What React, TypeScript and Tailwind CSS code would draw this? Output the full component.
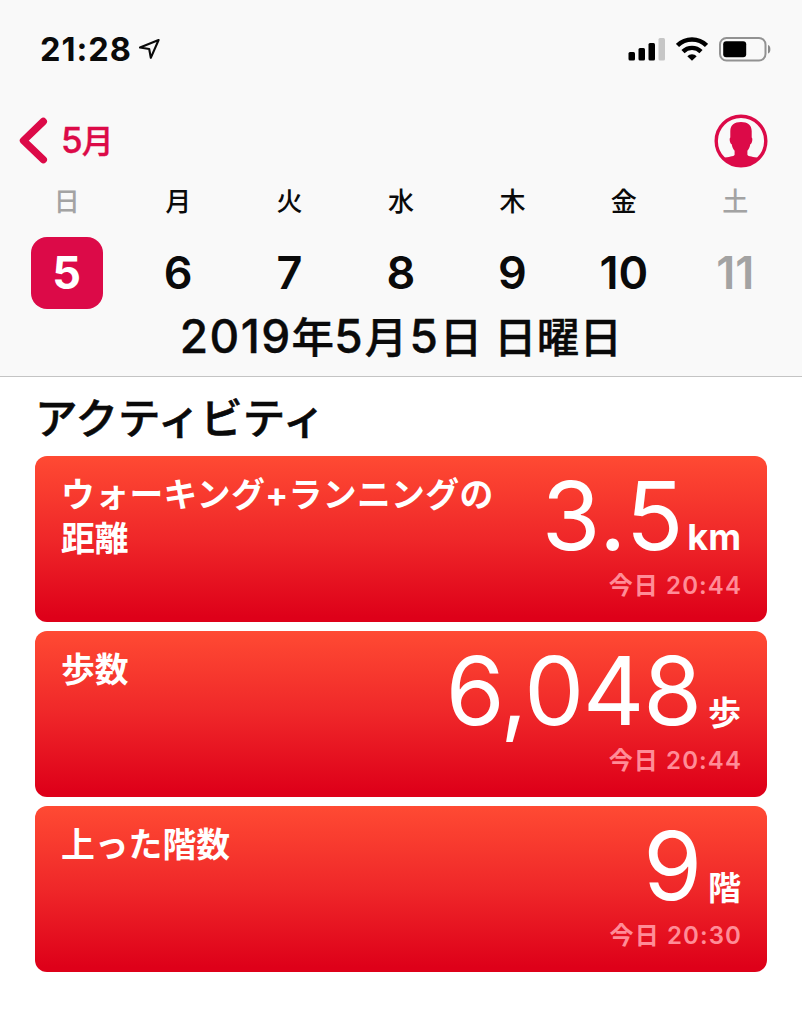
import React, { useState } from 'react';

const days = [
  { week: '日', date: 5, off: true },
  { week: '月', date: 6, off: false },
  { week: '火', date: 7, off: false },
  { week: '水', date: 8, off: false },
  { week: '木', date: 9, off: false },
  { week: '金', date: 10, off: false },
  { week: '土', date: 11, off: true },
];

const activities = [
  { title: ['ウォーキング+ランニングの', '距離'], value: '3.5', unit: 'km', time: '今日 20:44' },
  { title: ['歩数'], value: '6,048', unit: '歩', time: '今日 20:44' },
  { title: ['上った階数'], value: '9', unit: '階', time: '今日 20:30' },
];

const StatusBar = () => {
  return (
    <div className="flex h-[98px] items-center justify-between pl-10 pr-[30px]">
      <div className="flex items-center">
        <span className="pt-[2px] text-[32.5px] leading-10 font-bold tracking-[1px]">21:28</span>
        <svg className="ml-[6px] h-6 w-6" viewBox="0 0 24 24" fill="none" stroke="#0a0a0a" strokeWidth="2.1" strokeLinejoin="round">
          <path d="M20.600 3 2 10.500 11.200 12 12.800 20.800Z" />
        </svg>
      </div>

      <div className="flex items-center">
        {/* Signal strength */}
        <svg className="h-6 w-[38px]" viewBox="0 0 38 24">
          <rect x="0.5" y="15" width="6.5" height="8.5" rx="1.5" />
          <rect x="10.5" y="11" width="6.5" height="12.5" rx="1.5" />
          <rect x="20.5" y="6" width="6.5" height="17.5" rx="1.5" />
          <rect x="30.5" y="1" width="6.5" height="22.5" rx="1.5" fill="#c6c6c6" />
        </svg>
        {/* Wifi */}
        <svg className="ml-[10px] h-6 w-8" viewBox="0 0 32 24" fill="none" stroke="#000" strokeWidth="4.4">
          <path d="M1.5 8.400a20.6 20.6 0 0 1 29 0" />
          <path d="M7 14.600a12.7 12.7 0 0 1 18 0" />
          <path d="M16 23.800 11.300 19.200a6.6 6.6 0 0 1 9.400 0Z" fill="#000" stroke="none" />
        </svg>
        {/* Battery */}
        <svg className="ml-[11px] h-[26px] w-[53px]" viewBox="0 0 53 26">
          <rect x="1" y="2" width="45.5" height="22.5" rx="6.5" fill="none" stroke="#929292" strokeWidth="2" />
          <rect x="4.2" y="5.2" width="23" height="16" rx="3" />
          <path d="M49 9c3.2 1 3.2 7.5 0 8.5Z" fill="#8a8a8a" />
        </svg>
      </div>
    </div>
  );
};

const Card = ({ title, value, unit, time }: { title: string[]; value: string; unit: string; time: string }) => {
  return (
    <div className="flex h-[166px] justify-between rounded-xl bg-linear-to-b/srgb from-[#ff4a33] via-[#ef2729] via-50% to-[#de0019] to-97% px-[26px] text-white">
      <div className="pt-[17px] text-[33.8px] leading-[44px] font-bold whitespace-nowrap">
        {title.map((line) => (
          <p key={line} className={line.includes('+') ? 'tracking-[0.4px]' : ''}>
            {line}
          </p>
        ))}
      </div>
      <div className="flex flex-col items-end">
        <div className="flex items-baseline whitespace-nowrap">
          <span
            className={
              value.includes('.')
                ? 'text-[95px] leading-[119px] tracking-[0.7px]'
                : 'text-[95px] leading-[119px] tracking-[-1.1px]'
            }
          >
            {value}
          </span>
          <span className={unit === 'km' ? 'ml-[3px] text-[36px] leading-10 font-bold' : 'ml-[7px] text-[33px] leading-10 font-bold'}>{unit}</span>
        </div>
        <p className="-mr-px text-[24px] leading-[22px] font-semibold tracking-[1.1px] text-[#ff8c97]">{time}</p>
      </div>
    </div>
  );
};

const App = () => {
  const [selected, setSelected] = useState(5); // Currently selected day

  return (
    <div className="h-[1024px] w-[802px] overflow-hidden bg-white font-['Inter','Noto_Sans_CJK_JP',sans-serif] text-[#0a0a0a]" lang="ja">
      <header className="h-[377px] border-b border-[#c4c4c4] bg-[#f9f9f9]">
        <StatusBar />

        <div className="flex h-[85px] items-center justify-between pl-[18px] pr-[34px]">
          <button className="flex items-center text-[#dc0a48]">
            <svg className="h-12 w-[30px]" viewBox="0 0 30 48" fill="none" stroke="currentColor" strokeWidth="7.4" strokeLinecap="round" strokeLinejoin="round">
              <path d="M25.3 4.5 5.5 23.600 25.3 42.700" />
            </svg>
            <span className="ml-[13px] pt-px text-[35px] leading-10 font-medium tracking-[-0.8px] [-webkit-text-stroke:0.4px]">
              5<span className="text-[32px]">月</span>
            </span>
          </button>
          {/* Profile */}
          <svg className="h-[54px] w-[54px]" viewBox="0 0 54 54">
            <circle cx="27" cy="27" r="24.8" fill="none" stroke="#dc0a48" strokeWidth="3.4" />
            <path
              d="M27 8c-6.500 0-10.700 3-10.700 9v6.500c-.8.5-.8 2.200-.3 4.200.4 1.600 1 2.400 1.700 2.600.5 3 1.500 5 2.900 6.400v4c-1 2-5.800 1.900-11.600 3.300A24 24 0 0 0 45 44c-5.800-1.400-10.600-1.300-11.600-3.300v-4c1.400-1.400 2.400-3.400 2.900-6.400.7-.2 1.300-1 1.700-2.600.5-2 .5-3.700-.3-4.200v-6.500C37.700 11 33.500 8 27 8Z"
              fill="#dc0a48"
            />
          </svg>
        </div>

        <div className="grid grid-cols-7 px-[11px]">
          {days.map(({ week, date, off }) => (
            <button key={date} className="flex flex-col items-center" onClick={() => setSelected(date)}>
              <span className={off ? 'h-[54px] text-[26px] leading-[38px] font-medium text-[#a3a3a3]' : 'h-[54px] text-[26px] leading-[38px] font-medium'}>
                {week}
              </span>
              <span
                className={
                  selected === date
                    ? 'h-[72px] w-[72px] rounded-2xl bg-[#dc0a48] text-[45px] leading-[71px] font-bold text-white'
                    : off
                      ? 'h-[72px] text-[45px] leading-[71px] font-semibold text-[#a3a3a3]'
                      : 'h-[72px] text-[45px] leading-[71px] font-semibold'
                }
              >
                {date}
              </span>
            </button>
          ))}
        </div>

        <h1 className="text-center text-[42.5px] leading-[54px] font-medium tracking-[0.2px] [-webkit-text-stroke:0.4px]">
          <span className="text-[46px] tracking-[1.4px]">2019</span>年<span className="text-[46px] tracking-[2px]">5</span>月
          <span className="ml-[2px] text-[46px] tracking-[2px]">5</span>日 日曜日
        </h1>
      </header>

      <main className="px-[35px]">
        <h2 className="h-[79px] text-[42.5px] leading-[84px] font-medium [-webkit-text-stroke:0.6px]">アクティビティ</h2>
        <div className="flex flex-col gap-[9px]">
          {activities.map((item) => (
            <Card key={item.value} {...item} />
          ))}
        </div>
      </main>
    </div>
  );
};

export default App;
